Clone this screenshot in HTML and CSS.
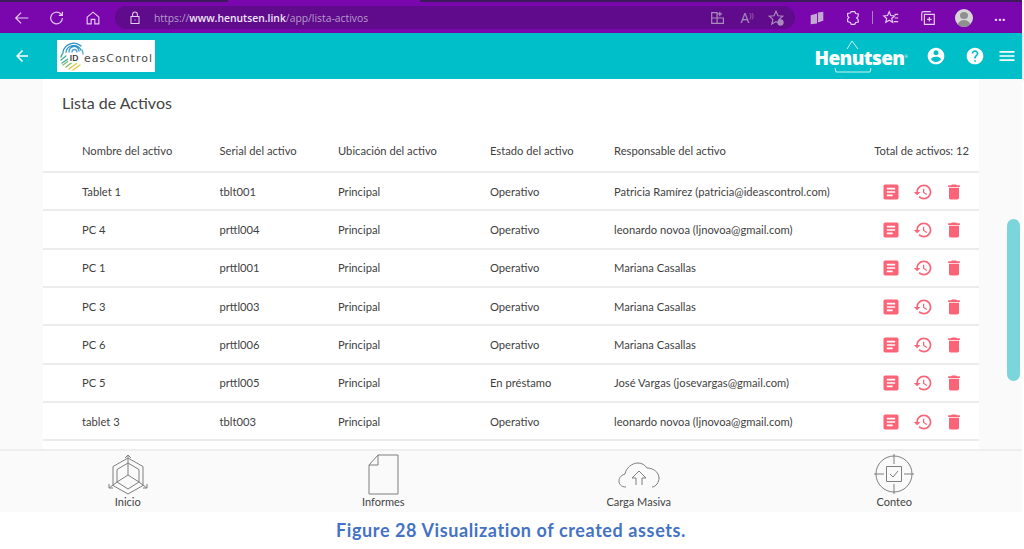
FILE: index.html
```html
<!DOCTYPE html>
<html lang="en">
<head>
<meta charset="UTF-8">
<title>Lista de Activos</title>
<link rel="stylesheet" href="styles.css">
</head>
<body>
<svg class="defs" width="0" height="0">
    <symbol id="i-desc" viewBox="0 0 24 24"><path d="M19 3H5c-1.100 0-2 .9-2 2v14c0 1.100.9 2 2 2h14c1.100 0 2-.9 2-2V5c0-1.100-.9-2-2-2zm-5 14H7v-2h7v2zm3-4H7v-2h10v2zm0-4H7V7h10v2z"/></symbol>
    <symbol id="i-history" viewBox="0 0 24 24"><path d="M13 3c-4.970 0-9 4.030-9 9H1l3.890 3.890.07.14L9 12H6c0-3.870 3.130-7 7-7s7 3.130 7 7-3.130 7-7 7c-1.930 0-3.680-.79-4.940-2.060l-1.420 1.420C8.270 19.990 10.510 21 13 21c4.970 0 9-4.030 9-9s-4.030-9-9-9zm-1 5v5l4.280 2.540.72-1.210-3.500-2.080V8H12z"/></symbol>
    <symbol id="i-trash" viewBox="0 0 24 24"><path d="M6 19c0 1.100.9 2 2 2h8c1.100 0 2-.9 2-2V7H6v12zM19 4h-3.500l-1-1h-5l-1 1H5v2h14V4z"/></symbol>
</svg>

<div class="app">
    <div class="browser">
        <svg class="b-icon" viewBox="0 0 20 20"><path d="M17 10H3M9 4l-6 6 6 6"/></svg>
        <svg class="b-icon refresh" viewBox="0 0 20 20"><path d="M16 10a6.500 6.500 0 1 1-2-4.700L16 7M16 3v4h-4"/></svg>
        <svg class="b-icon home" viewBox="0 0 20 20"><path d="M3.500 9L10 3.500 16.500 9v7.500h-4.500v-5H8v5H3.500z"/></svg>
        <div class="address">
            <svg class="b-icon lock" viewBox="0 0 20 20"><path d="M5 8h10v9H5zM7 8V5.500a3 3 0 0 1 6 0V8M10 12v1"/></svg>
            <span class="url">https://<b>www.henutsen.link</b>/app/lista-activos</span>
            <div class="address-tools">
                <svg class="b-icon dim" viewBox="0 0 20 20"><path d="M3 4h6v12H3zM3 10h13v6H9M12 3v5M9.500 5.500h5"/></svg>
                <span class="read-aloud">A<small>))</small></span>
                <svg class="b-icon dim" viewBox="0 0 20 20"><path d="M10 2.500l2.200 5 5.300.5-4 3.500 1.200 5.200L10 14l-4.700 2.700 1.200-5.200-4-3.500 5.300-.5z"/><circle class="fill" cx="15" cy="15" r="3.500"/></svg>
            </div>
        </div>
        <div class="browser-tools">
            <svg class="b-icon soft" viewBox="0 0 20 20"><path class="fill" d="M3 7l7-2v11l-7 1zM11 4l6-1v10l-6 2z"/></svg>
            <svg class="b-icon ext" viewBox="0 0 20 20"><path d="M8 3h4l1 2 3 .5-.5 3-1.500 1.500 1.500 1.500.5 3-3 .5-1 2H8l-1-2-3-1V11l1.500-1.500L4 8V5l3-.5z"/></svg>
            <span class="sep"></span>
            <svg class="b-icon fav" viewBox="0 0 20 20"><path d="M8 3l1.800 4.300 4.200.4-3.200 2.800 1 4.200L8 12.500 4.200 14.700l1-4.200L2 7.700l4.200-.4zM14 6h4M14 10h4M13 14h5"/></svg>
            <svg class="b-icon coll" viewBox="0 0 20 20"><path d="M6 6h11v11H6zM3 13V5a2 2 0 0 1 2-2h8M11.500 9v5M9 11.500h5"/></svg>
            <span class="avatar"><span class="avatar-head"></span><span class="avatar-body"></span></span>
            <span class="dots">···</span>
        </div>
    </div>

    <header class="topbar">
        <svg class="m-icon back" viewBox="0 0 24 24"><path d="M20 11H7.830l5.590-5.590L12 4l-8 8 8 8 1.410-1.410L7.830 13H20v-2z"/></svg>
        <div class="logo">
            <svg class="print" viewBox="0 0 24 30">
                <g fill="none" stroke-width="1.300" stroke-linecap="round">
                    <path stroke="#2c93c9" d="M3 11a11 11 0 0 1 18-6M6 11a8 8 0 0 1 15-2M9 11a5 5 0 0 1 10-1"/>
                    <path stroke="#4aa7d8" d="M12 11a2.500 2.500 0 0 1 5 0M22 9a8 8 0 0 1 1 4"/>
                    <path stroke="#3fa9a0" d="M1 16a10 10 0 0 1 2-4M1 19l5-4M2 22l6-4"/>
                    <path stroke="#7cbb6a" d="M3 24l8-6M6 26l8-6"/>
                    <path stroke="#e3c93e" d="M9 28l8-6M13 29l7-5"/>
                </g>
            </svg>
            <span class="logo-id">ID</span>
            <span class="logo-text">easControl</span>
        </div>
        <div class="brand">
            <svg class="brand-marks" viewBox="0 0 92 36"><path d="M31 11l5-8 6 8M19 30l1 4h34l1-4"/></svg>
            <span class="brand-name">Henutsen<sup>®</sup></span>
        </div>
        <svg class="m-icon" viewBox="0 0 24 24"><path d="M12 2C6.480 2 2 6.480 2 12s4.480 10 10 10 10-4.480 10-10S17.520 2 12 2zm0 3c1.660 0 3 1.340 3 3s-1.340 3-3 3-3-1.340-3-3 1.340-3 3-3zm0 14.200c-2.500 0-4.710-1.280-6-3.220.03-1.990 4-3.080 6-3.080 1.990 0 5.970 1.090 6 3.080-1.290 1.940-3.500 3.220-6 3.220z"/></svg>
        <svg class="m-icon" viewBox="0 0 24 24"><path d="M12 2C6.480 2 2 6.480 2 12s4.480 10 10 10 10-4.480 10-10S17.520 2 12 2zm1 17h-2v-2h2v2zm2.070-7.750l-.9.92C13.450 12.900 13 13.500 13 15h-2v-.5c0-1.100.45-2.100 1.170-2.830l1.240-1.260c.37-.36.59-.86.59-1.410 0-1.100-.9-2-2-2s-2 .9-2 2H8c0-2.210 1.790-4 4-4s4 1.790 4 4c0 .88-.36 1.680-.93 2.250z"/></svg>
        <svg class="m-icon menu" viewBox="0 0 24 24"><path d="M3 18h18v-2H3v2zm0-5h18v-2H3v2zm0-7v2h18V6H3z"/></svg>
    </header>

    <main class="content">
        <section class="card">
            <h1>Lista de Activos</h1>
            <div class="row head">
                <span>Nombre del activo</span>
                <span>Serial del activo</span>
                <span>Ubicación del activo</span>
                <span>Estado del activo</span>
                <span>Responsable del activo</span>
                <span class="total">Total de activos: 12</span>
            </div>
            <div class="row">
                <span>Tablet 1</span><span>tblt001</span><span>Principal</span><span>Operativo</span>
                <span>Patricia Ramírez (patricia@ideascontrol.com)</span>
                <span class="actions"><svg><use href="#i-desc"/></svg><svg><use href="#i-history"/></svg><svg><use href="#i-trash"/></svg></span>
            </div>
            <div class="row">
                <span>PC 4</span><span>prttl004</span><span>Principal</span><span>Operativo</span>
                <span>leonardo novoa (ljnovoa@gmail.com)</span>
                <span class="actions"><svg><use href="#i-desc"/></svg><svg><use href="#i-history"/></svg><svg><use href="#i-trash"/></svg></span>
            </div>
            <div class="row">
                <span>PC 1</span><span>prttl001</span><span>Principal</span><span>Operativo</span>
                <span>Mariana Casallas</span>
                <span class="actions"><svg><use href="#i-desc"/></svg><svg><use href="#i-history"/></svg><svg><use href="#i-trash"/></svg></span>
            </div>
            <div class="row">
                <span>PC 3</span><span>prttl003</span><span>Principal</span><span>Operativo</span>
                <span>Mariana Casallas</span>
                <span class="actions"><svg><use href="#i-desc"/></svg><svg><use href="#i-history"/></svg><svg><use href="#i-trash"/></svg></span>
            </div>
            <div class="row">
                <span>PC 6</span><span>prttl006</span><span>Principal</span><span>Operativo</span>
                <span>Mariana Casallas</span>
                <span class="actions"><svg><use href="#i-desc"/></svg><svg><use href="#i-history"/></svg><svg><use href="#i-trash"/></svg></span>
            </div>
            <div class="row">
                <span>PC 5</span><span>prttl005</span><span>Principal</span><span>En préstamo</span>
                <span>José Vargas (josevargas@gmail.com)</span>
                <span class="actions"><svg><use href="#i-desc"/></svg><svg><use href="#i-history"/></svg><svg><use href="#i-trash"/></svg></span>
            </div>
            <div class="row">
                <span>tablet 3</span><span>tblt003</span><span>Principal</span><span>Operativo</span>
                <span>leonardo novoa (ljnovoa@gmail.com)</span>
                <span class="actions"><svg><use href="#i-desc"/></svg><svg><use href="#i-history"/></svg><svg><use href="#i-trash"/></svg></span>
            </div>
        </section>
        <div class="scrollbar"></div>
    </main>

    <nav class="bottom">
        <a class="tab">
            <svg viewBox="0 0 44 44"><path d="M22 5l15 8.500v19L22 41 7 32.500v-19zM22 10l11 6.500v12.500L22 36 11 29v-12.500zM22 2v20M22 22l11 7M22 22l-11 7M11 29L3 35M33 29l8 6M19 5l3-3 3 3M3 31v4h4M37 35h4v-4"/></svg>
            <span>Inicio</span>
        </a>
        <a class="tab">
            <svg viewBox="0 0 44 44"><path d="M17 2h20v39H8V12zM8 12h9V2"/></svg>
            <span>Informes</span>
        </a>
        <a class="tab">
            <svg viewBox="0 0 44 44"><path d="M9 34c-5 0-7-3-7-6 0-4 3-6 6-7 1-6 7-11 13-11 4 0 7 2 9 5 6 0 12 4 12 10 0 4-3 9-7 9M15 25l7-7 7 7h-4M15 25h4v7M25 25v7"/></svg>
            <span>Carga Masiva</span>
        </a>
        <a class="tab">
            <svg viewBox="0 0 44 44"><circle cx="22" cy="21" r="18"/><path d="M22 1v10M22 31v10M2 21h10M32 21h10M14.500 13.500h15v15h-15zM18 21l3 3 5-6"/></svg>
            <span>Conteo</span>
        </a>
    </nav>

    <p class="caption">Figure 28 Visualization of created assets.</p>
</div>
</body>
</html>
```
FILE: styles.css
```css
html, body {
    margin: 0;
    height: 549px;
    overflow: hidden;
    background: #ffffff;
}

body {
    font-family: Lato, "Open Sans", sans-serif;
    color: #444444;
}

.defs {
    display: block;
    height: 0;
}

.app {
    width: 1022px;
    height: 549px;
    display: flex;
    flex-direction: column;
}

/* browser chrome */
.browser {
    height: 33px;
    box-sizing: border-box;
    padding-top: 2px;
    background:
        linear-gradient(90deg, #3c1a5c 228px, #7a07ad 228px, #7a07ad 420px, #3c1a5c 420px) top / 100% 2px no-repeat,
        #7a07ad;
    display: flex;
    align-items: center;
    padding-left: 13px;
    flex-shrink: 0;
}

.b-icon {
    width: 18px;
    height: 18px;
    fill: none;
    stroke: #e4cdf0;
    stroke-width: 1.3;
    flex-shrink: 0;
}

.b-icon .fill {
    fill: currentColor;
    stroke: none;
}

.refresh {
    margin-left: 17px;
}

.home {
    margin-left: 18px;
}

.address {
    width: 680px;
    height: 23px;
    margin-left: 13px;
    border-radius: 12px;
    background: #5f0b8c;
    display: flex;
    align-items: center;
    padding-left: 12px;
    box-sizing: border-box;
}

.lock {
    width: 16px;
    height: 16px;
}

.url {
    margin-left: 11px;
    font-family: "Open Sans", sans-serif;
    font-size: 10.35px;
    color: #b79ccb;
}

.url b {
    color: #f0e6f6;
    font-weight: 600;
}

.address-tools {
    margin-left: auto;
    margin-right: 10px;
    display: flex;
    align-items: center;
    gap: 11px;
}

.dim {
    stroke: #a98cbd;
    color: #a98cbd;
}

.read-aloud {
    width: 18px;
    font-family: "Open Sans", sans-serif;
    font-size: 14px;
    text-align: center;
    white-space: nowrap;
    color: #a98cbd;
}

.read-aloud small {
    font-size: 7px;
    vertical-align: 5px;
}

.browser-tools {
    flex: 1;
    display: flex;
    align-items: center;
    padding-left: 13px;
}

.soft {
    color: #c3aad2;
    stroke: none;
}

.ext {
    margin-left: 18px;
}

.sep {
    width: 1px;
    height: 13px;
    margin-left: 10px;
    background: #a783bf;
}

.fav {
    margin-left: 9px;
}

.coll {
    margin-left: 19px;
}

.avatar {
    width: 18px;
    height: 18px;
    margin-left: 18px;
    border-radius: 50%;
    background: #d6d6d6;
    overflow: hidden;
    display: flex;
    flex-direction: column;
    align-items: center;
    flex-shrink: 0;
}

.avatar-head {
    width: 8px;
    height: 8px;
    margin-top: 3px;
    border-radius: 50%;
    background: #8f8f8f;
}

.avatar-body {
    width: 14px;
    height: 8px;
    margin-top: 1px;
    border-radius: 7px 7px 0 0;
    background: #8f8f8f;
}

.dots {
    margin-left: 21px;
    font-size: 15px;
    font-weight: 400;
    color: #eadcf2;
}

/* app header */
.topbar {
    height: 46px;
    background: #00bfc8;
    display: flex;
    align-items: center;
    padding-right: 5.5px;
    box-shadow: 0 1px 3px rgba(0, 0, 0, 0.25);
    position: relative;
    flex-shrink: 0;
}

.m-icon {
    width: 20px;
    height: 20px;
    fill: #ffffff;
    margin-left: 18.5px;
    flex-shrink: 0;
}

.menu {
    margin-left: 12px;
}

.back {
    width: 18px;
    height: 18px;
    margin-left: 13px;
}

.logo {
    width: 98px;
    height: 32px;
    margin-left: 26px;
    background: #ffffff;
    display: flex;
    align-items: center;
    position: relative;
}

.print {
    width: 24px;
    height: 30px;
    margin-left: 3px;
    flex-shrink: 0;
}

.logo-id {
    position: absolute;
    left: 11px;
    top: 13px;
    width: 12px;
    text-align: center;
    font-size: 8px;
    font-weight: 700;
    line-height: 10px;
    color: #333333;
    background: rgba(255, 255, 255, 0.85);
}

.logo-text {
    margin: 5px 0 0 0;
    font-family: "DejaVu Sans", sans-serif;
    font-size: 11px;
    color: #4a4a4a;
    letter-spacing: 1px;
    white-space: nowrap;
}

.brand {
    margin-left: auto;
    width: 92px;
    height: 36px;
    position: relative;
    display: flex;
    align-items: center;
}

.brand-marks {
    position: absolute;
    left: 0;
    top: 0;
    width: 92px;
    height: 36px;
    fill: none;
    stroke: #c9f1f3;
    stroke-width: 1;
}

.brand-name {
    font-family: "Open Sans", sans-serif;
    font-size: 19px;
    font-weight: 800;
    color: #ffffff;
    letter-spacing: -0.6px;
    line-height: 36px;
    margin-top: 4px;
    margin-left: -1px;
}

.brand-name sup {
    font-size: 4px;
    font-weight: 400;
}

/* list */
.content {
    height: 370px;
    background: #fafafa;
    overflow: hidden;
    position: relative;
    flex-shrink: 0;
}

.card {
    width: 936px;
    height: 100%;
    margin-left: 43px;
    background: #ffffff;
}

.card h1 {
    margin: 0;
    padding: 13px 0 0 19px;
    height: 38px;
    font-size: 16px;
    font-weight: 400;
    line-height: 21px;
    color: #444444;
}

.row {
    display: grid;
    grid-template-columns: 137.5px 118.5px 152px 124px 1fr 116px;
    align-items: center;
    height: 36.33px;
    padding: 0 10px 0 39px;
    border-bottom: 2px solid #ececec;
    font-size: 11.2px;
    color: #3f3f3f;
}

.row.head {
    height: 41px;
}

.total {
    text-align: right;
}

.actions {
    display: flex;
    justify-content: flex-end;
    gap: 11.5px;
    padding: 1px 5px 0 0;
}

.actions svg {
    width: 20px;
    height: 20px;
    fill: #fb6477;
}

.scrollbar {
    position: absolute;
    left: 1007px;
    top: 140px;
    width: 13px;
    height: 162px;
    border-radius: 7px;
    background: #7bd6dc;
}

/* bottom tabs */
.bottom {
    height: 63px;
    box-sizing: border-box;
    border-top: 2px solid #eeeeee;
    background: #fafafa;
    display: grid;
    grid-template-columns: repeat(4, 1fr);
    flex-shrink: 0;
}

.tab {
    display: flex;
    flex-direction: column;
    align-items: center;
    font-size: 11px;
    color: #444444;
}

.tab svg {
    width: 44px;
    height: 44px;
    margin-top: 2px;
    fill: none;
    stroke: #7f7f7f;
    stroke-width: 1;
    flex-shrink: 0;
}

.tab span {
    line-height: 13px;
    margin-top: -2.5px;
}

.caption {
    margin: 0;
    padding-top: 7px;
    text-align: center;
    font-size: 18px;
    font-weight: 700;
    line-height: 22px;
    letter-spacing: 0.6px;
    color: #4472c4;
}
```
